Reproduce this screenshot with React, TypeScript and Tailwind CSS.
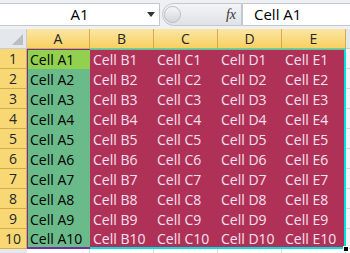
import type { JSX } from "react";

const cols: string[] = ["A", "B", "C", "D", "E"];
const rows: number[] = [1, 2, 3, 4, 5, 6, 7, 8, 9, 10];

const FormulaBar = (): JSX.Element => {
    return (
        <div className="flex h-[29px] bg-[#eef0f3] pt-[3px] pb-[3px]">
            <div className="relative flex h-[23px] w-[160px] items-center justify-center border border-l-0 border-[#c3c8cf] bg-white text-[15px] text-black">
                A1
                <span className="absolute right-[4px] top-[8px] h-0 w-0 border-x-[4px] border-t-[5px] border-x-transparent border-t-[#333]"></span>
            </div>
            <div className="ml-[2px] flex h-[23px] w-[80px] items-center rounded-l-full border border-[#c3c8cf] bg-gradient-to-b from-[#f3f4f6] to-[#dfe2e6]">
                <span className="ml-[1px] h-[17px] w-[17px] rounded-full border border-[#b9bec5] bg-gradient-to-b from-[#f5f6f8] to-[#d3d7dc]"></span>
                <span className="ml-auto mr-[5px] font-['Liberation_Serif',serif] text-[14px] italic text-[#333]">fx</span>
            </div>
            <div className="flex h-[23px] flex-1 items-center border border-r-0 border-[#c3c8cf] bg-white pl-[11px] text-[15px] text-black">
                Cell A1
            </div>
        </div>
    );
};

export default function App(): JSX.Element {
    return (
        <div className="h-[253px] w-[350px] overflow-hidden bg-[#e9ecf0] font-['Open_Sans',sans-serif]">
            <FormulaBar />
            <div className="grid grid-cols-[27px_63px_64px_64px_64px_64px_4px] grid-rows-[20px_repeat(10,20px)_4px]">
                <div className="relative border-b border-r border-[#c9cdd2] bg-[#e4e7eb]">
                    <span className="absolute bottom-[3px] right-[3px] h-0 w-0 border-b-[11px] border-l-[11px] border-b-[#b9bec5] border-l-transparent"></span>
                </div>
                {cols.map((c: string) => (
                    <div key={c} className="flex items-center justify-center border-b border-r border-[#d6a94a] bg-gradient-to-b from-[#fbe6a2] to-[#f7d05f] text-[14px] text-[#262626]">
                        {c}
                    </div>
                ))}
                <div className="border-b border-[#c9cdd2] bg-[#e4e7eb]"></div>
                {rows.map((r: number) => {
                    return [
                        <div key={"h" + r} className="flex items-center justify-center border-b border-r border-[#d6a94a] bg-[#f8d875] text-[14px] text-[#262626]">
                            {r}
                        </div>,
                        <div key={"a" + r} className={`flex items-center border-l border-[#7030a0] pl-[2px] text-[14px] text-black ${r === 1 ? "border-t bg-[#92d050]" : "bg-[#6bba89]"} ${r === 10 ? "border-b-2" : ""}`}>
                            Cell A{r}
                        </div>,
                        ...cols.slice(1).map((c: string, i: number) => (
                            <div key={c + r} className={`flex items-center bg-[#b03158] pl-[3px] text-[14px] text-[#f5e1f0] border-[#00e1e1] ${r === 1 ? "border-t" : ""} ${r === 10 ? "border-b-2" : ""} ${i === 3 ? "border-r-2" : ""}`}>
                                Cell {c}{r}
                            </div>
                        )),
                        <div key={"x" + r} className="border-b border-[#d4d8dd] bg-[#f4f5f7]"></div>,
                    ];
                })}
                <div className="bg-[#e4e7eb]"></div>
                {cols.map((c: string) => (
                    <div key={"f" + c} className="border-r border-[#d4d8dd] bg-white"></div>
                ))}
                <div className="relative bg-white">
                    <span className="absolute -left-[3px] -top-[3px] h-[6px] w-[6px] border border-white bg-black"></span>
                </div>
            </div>
        </div>
    );
}
